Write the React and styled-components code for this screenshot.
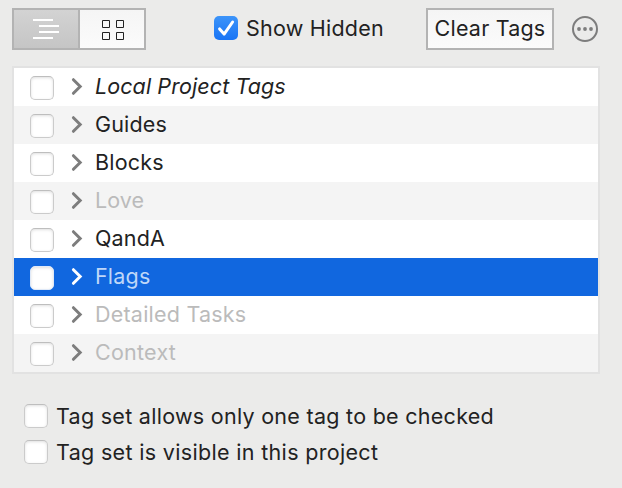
import React, { useState } from 'react';
import styled, { createGlobalStyle, css } from 'styled-components';

const COLOR = {
  background: '#ebebea',
  text: '#222222',
  hiddenText: '#bbbbbb',
  border: '#b3b3b3',
  tableBorder: '#e2e2e2',
  arrow: '#7d7d7d',
  stripe: '#f4f4f4',
  selected: '#1167df',
  selectedText: '#bfd7f8',
};

const GlobalStyle = createGlobalStyle`
  * {
    box-sizing: border-box;
  }
  body {
    margin: 0;
    background: ${COLOR.background};
    color: ${COLOR.text};
    font-family: Inter, 'Liberation Sans', sans-serif;
    font-size: 21.5px;
    line-height: 26px;
  }
  svg {
    display: block;
  }
`;

const Panel = styled.main`
  height: 488px;
  padding: 8px 22px 0 12px;
  overflow: hidden;
`;

const Toolbar = styled.header`
  display: flex;
  align-items: flex-start;
  height: 58px;
`;

const ViewSwitch = styled.div`
  display: flex;
  width: 134px;
  height: 42px;
  border: 2px solid ${COLOR.border};
`;

const ViewButton = styled.button`
  flex: 1;
  padding: 0;
  border: 0;
  color: ${COLOR.text};
  background: linear-gradient(#f5f5f5, #fbfbfb);
  & + & {
    flex: 0 0 66px;
    border-left: 2px solid ${COLOR.border};
  }
  ${({ $active }) =>
    $active &&
    css`
      color: #fff;
      background: linear-gradient(#d3d3d3, #c5c5c5);
    `}
`;

const Text = styled.span`
  white-space: nowrap;
  letter-spacing: ${({ $spacing }) => $spacing || 0}px;
`;

const ShowHidden = styled.label`
  display: flex;
  width: 212px;
  margin-left: 68px;
  padding-top: 8px;
  ${Text} {
    margin: -1px 0 0 8px;
  }
`;

const ClearButton = styled.button`
  display: flex;
  justify-content: center;
  width: 128px;
  height: 42px;
  padding: 5px 0;
  border: 2px solid ${COLOR.border};
  background: linear-gradient(#f5f5f5, #fbfbfb);
  color: ${COLOR.text};
  font: inherit;
`;

const MoreButton = styled.button`
  margin: 8px 0 0 18px;
  padding: 0;
  border: 0;
  background: none;
`;

const Box = styled.span`
  display: block;
  flex: none;
  width: 24px;
  height: 24px;
  border: 1px solid #cbcbcb;
  border-top-color: #bebebe;
  border-radius: 5px;
  background: #fff;
  box-shadow: inset 0 1px 3px rgba(0, 0, 0, 0.13);
  ${({ $checked }) =>
    $checked &&
    css`
      border: 0;
      background: linear-gradient(#3c94f9, #1874f5);
      box-shadow: none;
    `}
`;

const TagTable = styled.ul`
  margin: 0;
  padding: 0;
  border: 2px solid ${COLOR.tableBorder};
  list-style: none;
`;

const TagRow = styled.li`
  display: flex;
  height: 38px;
  padding: 8px 0 0 16px;
  color: ${({ $hidden }) => ($hidden ? COLOR.hiddenText : COLOR.text)};
  font-style: ${({ $italic }) => ($italic ? 'italic' : 'normal')};
  background: #fff;
  &:nth-child(even) {
    background: ${COLOR.stripe};
  }
  ${({ $selected }) =>
    $selected &&
    css`
      &&& {
        color: ${COLOR.selectedText};
        background: ${COLOR.selected};
      }
      ${Box} {
        border-color: #dfe9f8;
      }
    `}
  ${Text} {
    margin-top: -3px;
  }
`;

const Arrow = styled.span`
  width: 41px;
  padding: 1px 0 0 17px;
  color: ${({ $selected }) => ($selected ? '#fff' : COLOR.arrow)};
`;

const Options = styled.section`
  display: grid;
  gap: 12px;
  padding: 30px 0 0 12px;
`;

const Option = styled.label`
  display: flex;
  height: 24px;
  ${Text} {
    margin: -1px 0 0 8px;
  }
`;

const OutlineIcon = () => (
  <svg width="64" height="38" stroke="currentColor" strokeWidth="2">
    <path d="M19 10h20M25 16h20M25 22h20M19 28h20" />
  </svg>
);

const GridIcon = () => (
  <svg width="64" height="38" fill="none" stroke="currentColor">
    <path d="M22.5 10.5h7v7h-7zM36.5 10.5h7v7h-7zM22.5 22.5h7v7h-7zM36.5 22.5h7v7h-7z" />
  </svg>
);

const CheckIcon = () => (
  <svg width="24" height="24" fill="none" stroke="#fff" strokeWidth="3">
    <path d="M5.6 12.9l4.5 5.2L18.6 6" strokeLinecap="round" strokeLinejoin="round" />
  </svg>
);

const ArrowIcon = () => (
  <svg width="12" height="19" fill="none" stroke="currentColor" strokeWidth="3">
    <path d="M2.4 2.7l6.8 6.8-6.8 6.8" strokeLinecap="round" />
  </svg>
);

const MoreIcon = () => (
  <svg width="26" height="26" fill="#7d7d7d">
    <circle cx="13" cy="13" r="12" fill="none" stroke="#7d7d7d" strokeWidth="2" />
    <circle cx="7" cy="13" r="1.9" />
    <circle cx="13" cy="13" r="1.9" />
    <circle cx="19" cy="13" r="1.9" />
  </svg>
);

const tagSets = [
  { name: 'Local Project Tags', italic: true, spacing: 0.09 },
  { name: 'Guides' },
  { name: 'Blocks' },
  { name: 'Love', hidden: true, spacing: 0.05 },
  { name: 'QandA' },
  { name: 'Flags', hidden: true },
  { name: 'Detailed Tasks', hidden: true, spacing: 0.22 },
  { name: 'Context', hidden: true, spacing: 0.25 },
];

const App = () => {
  const [selected, setSelected] = useState('Flags');

  return (
    <>
      <GlobalStyle />
      <Panel>
        <Toolbar>
          <ViewSwitch>
            <ViewButton $active aria-label="Outline">
              <OutlineIcon />
            </ViewButton>
            <ViewButton aria-label="Grid">
              <GridIcon />
            </ViewButton>
          </ViewSwitch>
          <ShowHidden>
            <Box $checked>
              <CheckIcon />
            </Box>
            <Text $spacing={0.22}>Show Hidden</Text>
          </ShowHidden>
          <ClearButton>
            <Text $spacing={0.2}>Clear Tags</Text>
          </ClearButton>
          <MoreButton aria-label="More">
            <MoreIcon />
          </MoreButton>
        </Toolbar>
        <TagTable>
          {tagSets.map(({ name, italic, hidden, spacing = 0.18 }) => (
            <TagRow
              key={name}
              $italic={italic}
              $hidden={hidden}
              $selected={name === selected}
              onClick={() => setSelected(name)}
            >
              <Box />
              <Arrow $selected={name === selected}>
                <ArrowIcon />
              </Arrow>
              <Text $spacing={spacing}>{name}</Text>
            </TagRow>
          ))}
        </TagTable>
        <Options>
          <Option>
            <Box />
            <Text $spacing={0.28}>Tag set allows only one tag to be checked</Text>
          </Option>
          <Option>
            <Box />
            <Text $spacing={0.33}>Tag set is visible in this project</Text>
          </Option>
        </Options>
      </Panel>
    </>
  );
};

export default App;
